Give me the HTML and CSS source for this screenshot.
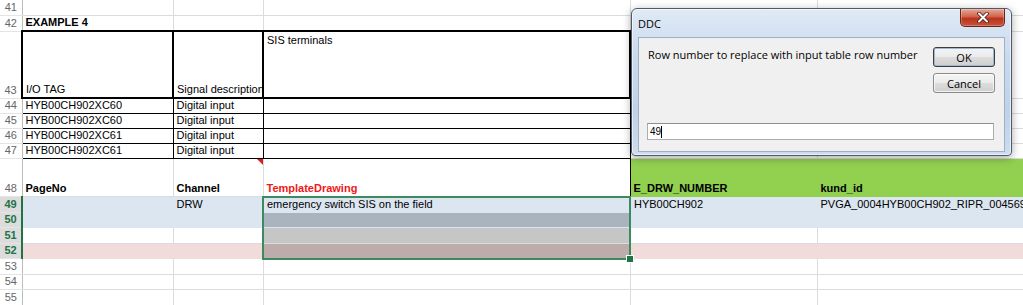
FILE: index.html
```html
<!DOCTYPE html>
<html lang="en">
<head>
  <meta charset="UTF-8">
  <title>DDC - Sheet</title>
  <link rel="stylesheet" href="styles.css">
</head>
<body>
  <!-- Worksheet -->
  <table class="sheet">
    <colgroup>
      <col class="col-hdr">
      <col class="col-a">
      <col class="col-b">
      <col class="col-c">
      <col class="col-d">
      <col class="col-e">
    </colgroup>
    <tbody>
      <tr class="h15"><th>41</th><td></td><td></td><td></td><td></td><td></td></tr>
      <tr class="h16"><th>42</th><td class="bold">EXAMPLE 4</td><td></td><td></td><td></td><td></td></tr>
      <tr class="h67">
        <th>43</th>
        <td class="box-thick">I/O TAG</td>
        <td class="box-thick">Signal description</td>
        <td class="box-thick top">SIS terminals</td>
        <td></td><td></td>
      </tr>
      <tr class="h15"><th>44</th><td class="box">HYB00CH902XC60</td><td class="box">Digital input</td><td class="box"></td><td></td><td></td></tr>
      <tr class="h15"><th>45</th><td class="box">HYB00CH902XC60</td><td class="box">Digital input</td><td class="box"></td><td></td><td></td></tr>
      <tr class="h15"><th>46</th><td class="box">HYB00CH902XC61</td><td class="box">Digital input</td><td class="box"></td><td></td><td></td></tr>
      <tr class="h15"><th>47</th><td class="box">HYB00CH902XC61</td><td class="box">Digital input</td><td class="box"></td><td></td><td></td></tr>
      <tr class="h38">
        <th>48</th>
        <td class="bold">PageNo</td>
        <td class="bold has-comment">Channel</td>
        <td class="bold red side-lines">TemplateDrawing</td>
        <td class="bold fill-green">E_DRW_NUMBER</td>
        <td class="bold fill-green">kund_id</td>
      </tr>
      <tr class="h16 row-blue">
        <th class="sel-hdr">49</th>
        <td></td>
        <td>DRW</td>
        <td class="sel sel-first">emergency switch SIS on the field</td>
        <td>HYB00CH902</td>
        <td>PVGA_0004HYB00CH902_RIPR_00456915</td>
      </tr>
      <tr class="h15 row-blue">
        <th class="sel-hdr">50</th>
        <td></td><td></td>
        <td class="sel sel-blue"></td>
        <td></td><td></td>
      </tr>
      <tr class="h16">
        <th class="sel-hdr">51</th>
        <td></td><td></td>
        <td class="sel sel-white"></td>
        <td></td><td></td>
      </tr>
      <tr class="h15 row-pink">
        <th class="sel-hdr">52</th>
        <td></td><td></td>
        <td class="sel sel-pink sel-last"></td>
        <td></td><td></td>
      </tr>
      <tr class="h16"><th>53</th><td></td><td></td><td></td><td></td><td></td></tr>
      <tr class="h15"><th>54</th><td></td><td></td><td></td><td></td><td></td></tr>
      <tr class="h16"><th>55</th><td></td><td></td><td></td><td></td><td></td></tr>
    </tbody>
  </table>

  <!-- Input box dialog -->
  <div class="dialog">
    <div class="dialog-title">
      <span class="dialog-caption">DDC</span>
      <button class="close-btn" aria-label="Close">
        <svg width="14" height="11" viewBox="0 0 14 11">
          <path d="M3 1.5 L11 9.5 M11 1.5 L3 9.5" stroke="#4a1a12" stroke-width="3.6" stroke-linecap="round" fill="none"/>
          <path d="M3 1.5 L11 9.5 M11 1.5 L3 9.5" stroke="#ffffff" stroke-width="2" stroke-linecap="round" fill="none"/>
        </svg>
      </button>
    </div>
    <div class="dialog-body">
      <div class="dialog-top">
        <p class="prompt">Row number to replace with input table row number</p>
        <div class="dialog-buttons">
          <button class="btn btn-default">OK</button>
          <button class="btn">Cancel</button>
        </div>
      </div>
      <div class="answer"><span class="answer-text">49</span><span class="caret"></span></div>
    </div>
  </div>
</body>
</html>
```

FILE: styles.css
```css
/* General */
* {
  box-sizing: border-box;
}

html, body {
  margin: 0;
}

body {
  position: relative;
  width: 1023px;
  height: 305px;
  overflow: hidden;
  background: #ffffff;
  font-family: 'Liberation Sans', Arial, sans-serif;
  font-size: 11px;
  color: #000;
}

/* Worksheet grid */
.sheet {
  border-collapse: collapse;
  table-layout: fixed;
  width: 1117px;
}

.col-hdr { width: 22px; }
.col-a { width: 151px; }
.col-b { width: 90px; }
.col-c { width: 367px; }
.col-d { width: 187px; }
.col-e { width: 300px; }

.h15 { height: 15px; }
.h16 { height: 16px; }
.h38 { height: 38px; }
.h67 { height: 67px; }

.sheet td, .sheet th {
  border: 1px solid #dadcdd;
  padding: 0 2px 1px 3px;
  vertical-align: bottom;
  white-space: nowrap;
  overflow: hidden;
  line-height: 13px;
  text-align: left;
  font-weight: normal;
}

.sheet tr:first-child > * {
  border-top: none;
}

/* Row headers */
.sheet th {
  padding: 0 0 1px;
  text-align: center;
  color: #666666;
  border-color: #e4e4e4;
  border-left: none;
  border-right: 1px solid #bcbcbc;
}

.sheet th.sel-hdr {
  background: #dcdcdc;
  color: #217346;
  font-weight: bold;
  border-right: 2px solid #217346;
}

/* Cell formats */
.sheet td.bold { font-weight: bold; }
.sheet td.red { color: #f01818; }
.sheet td.top {
  vertical-align: top;
  padding-top: 2px;
}

.sheet td.box-thick {
  border: 2px solid #000;
}

.sheet td.box {
  border: 1px solid #000;
}

.sheet td.side-lines {
  border-left: 1px solid #000;
  border-right: 1px solid #000;
  border-top: 1px solid #000;
}

.sheet td.fill-green {
  background: #92d050;
  border-color: #92d050;
}

.row-blue td {
  background: #dce6f1;
  border-color: #dce6f1;
}

.row-pink td {
  background: #f2dcdb;
  border-color: #f2dcdb;
}

/* Comment marker */
.has-comment {
  position: relative;
}

.has-comment::after {
  content: "";
  position: absolute;
  top: 0;
  right: 0;
  border-top: 6px solid #e21d1d;
  border-left: 6px solid transparent;
}

/* Selection C49:C52 */
.sheet td.sel {
  position: relative;
  overflow: visible;
  border-left: 2px solid #3d8a60;
  border-right: 2px solid #3d8a60;
}

.sheet td.sel-first { border-top: 2px solid #3d8a60; }
.sheet td.sel-blue { background: #aab4bf; }
.sheet td.sel-white { background: #c6c6c6; }
.sheet td.sel-pink { background: #bcacac; }
.sheet td.sel-last { border-bottom: 2px solid #3d8a60; }

.sel-last::after {
  content: "";
  position: absolute;
  right: -5px;
  bottom: -5px;
  width: 6px;
  height: 6px;
  background: #217346;
  border: 1px solid #ffffff;
}

/* Dialog */
.dialog {
  position: absolute;
  left: 631px;
  top: 8px;
  width: 381px;
  height: 148px;
  padding: 0 6px 3px;
  border: 1px solid #505a66;
  border-radius: 6px 6px 4px 4px;
  background: linear-gradient(180deg, #e0eaf6 0%, #cbdbee 30%, #c0d2e8 70%, #cddcee 100%);
  box-shadow: inset 0 0 0 1px rgba(255, 255, 255, 0.6), 0 2px 8px rgba(0, 0, 0, 0.35);
  font-family: 'Open Sans', 'Noto Sans', sans-serif;
}

.dialog-title {
  display: flex;
  justify-content: space-between;
  align-items: flex-start;
  height: 28px;
}

.dialog-caption {
  padding-top: 7px;
  font-size: 11px;
  line-height: 16px;
  color: #000;
}

.close-btn {
  width: 45px;
  height: 18px;
  margin: 0;
  padding: 0;
  display: flex;
  align-items: center;
  justify-content: center;
  border: 1px solid #6b2418;
  border-top: none;
  border-radius: 0 0 5px 5px;
  background: linear-gradient(180deg, #e6a899 0%, #d2634c 45%, #b8341c 55%, #c7543a 100%);
  box-shadow: inset 0 0 0 1px rgba(255, 255, 255, 0.25);
}

.dialog-body {
  display: flex;
  flex-direction: column;
  height: 115px;
  padding: 8px 9px 11px 8px;
  background: #f0f0f0;
  border: 1px solid #9fb0c4;
}

.dialog-top {
  display: flex;
  justify-content: space-between;
}

.prompt {
  margin: 0 0 0 1px;
  font-size: 11px;
  line-height: 18px;
  color: #000;
}

.dialog-buttons {
  display: flex;
  flex-direction: column;
  gap: 6px;
  padding-top: 1px;
}

.btn {
  width: 62px;
  height: 20px;
  margin: 0;
  padding: 0;
  font-family: 'Open Sans', 'Noto Sans', sans-serif;
  font-size: 11px;
  color: #000;
  border: 1px solid #8a8a8a;
  border-radius: 3px;
  background: linear-gradient(180deg, #f4f4f4 0%, #ebebeb 50%, #dddddd 51%, #cfcfcf 100%);
  box-shadow: inset 0 0 0 1px rgba(255, 255, 255, 0.7);
}

.btn-default {
  border: 1px solid #3c3c3c;
  box-shadow: inset 0 0 0 1px #9fb7cf;
}

.answer {
  display: flex;
  align-items: center;
  margin-top: auto;
  width: 347px;
  height: 17px;
  padding-left: 2px;
  background: #ffffff;
  border: 1px solid #abadb3;
  border-top-color: #8d8f96;
}

.answer-text {
  font-family: 'Liberation Sans', Arial, sans-serif;
  font-size: 10px;
  line-height: 12px;
}

.caret {
  width: 1px;
  height: 12px;
  background: #000;
}
```
